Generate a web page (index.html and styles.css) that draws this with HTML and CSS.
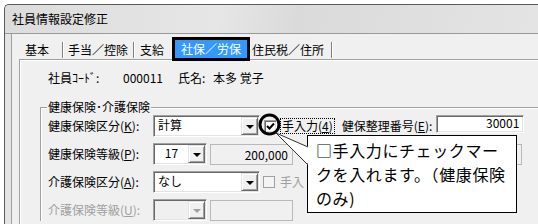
FILE: index.html
```html
<!DOCTYPE html>
<html lang="ja">
<head>
    <meta charset="UTF-8">
    <title>社員情報設定修正</title>
    <link rel="stylesheet" href="styles.css">
</head>
<body>
    <div class="window">
        <div class="titlebar">社員情報設定修正</div>
        <div class="client">
            <div class="tabs">
                <span class="tab tab-basic">基本</span>
                <span class="tab tab-allow">手当／控除</span>
                <span class="tab tab-pay">支給</span>
                <span class="tab tab-active">社保／労保</span>
                <span class="tab tab-res">住民税／住所</span>
            </div>
            <div class="panel">
                <div class="emp-row">
                    <span class="emp-label">社員ｺｰﾄﾞ:</span>
                    <span class="emp-code">000011</span>
                    <span class="emp-name-label">氏名:</span>
                    <span>本多 覚子</span>
                </div>

                <fieldset class="group">
                    <legend>健康保険･介護保険</legend>

                    <div class="row">
                        <span class="label">健康保険区分(<u>K</u>):</span>
                        <span class="combo combo-wide">
                            <span class="combo-value">計算</span>
                            <span class="combo-btn"><i class="arrow"></i></span>
                        </span>
                        <span class="check checked">
                            <svg width="9" height="9" viewBox="0 0 9 9"><path d="M1 4 L3.5 6.5 L8 1.5" fill="none" stroke="#000" stroke-width="2"/></svg>
                        </span>
                        <span class="check-label focus">手入力(<u>4</u>)</span>
                        <span class="label-num">健保整理番号(<u>E</u>):</span>
                        <span class="textbox">30001</span>
                    </div>

                    <div class="row">
                        <span class="label">健康保険等級(<u>P</u>):</span>
                        <span class="combo combo-narrow">
                            <span class="combo-value center">17</span>
                            <span class="combo-btn"><i class="arrow"></i></span>
                        </span>
                        <span class="readonly">200,000</span>
                        <span class="readonly readonly-far"></span>
                    </div>

                    <div class="row">
                        <span class="label">介護保険区分(<u>A</u>):</span>
                        <span class="combo combo-wide">
                            <span class="combo-value">なし</span>
                            <span class="combo-btn"><i class="arrow"></i></span>
                        </span>
                        <span class="check disabled"></span>
                        <span class="check-label muted">手入</span>
                    </div>

                    <div class="row">
                        <span class="label muted">介護保険等級(<u>U</u>):</span>
                        <span class="combo combo-narrow combo-disabled">
                            <span class="combo-value"></span>
                            <span class="combo-btn"><i class="arrow"></i></span>
                        </span>
                        <span class="readonly"></span>
                    </div>
                </fieldset>
            </div>
        </div>
    </div>

    <div class="callout">□手入力にチェックマー<br>クを入れます。（健康保険<br>のみ)</div>

    <svg class="marks" width="538" height="224" viewBox="0 0 538 224">
        <polygon points="276,133 309,147 309,165" fill="#fff"/>
        <polyline points="308,147 276,133 308,165" fill="none" stroke="#333" stroke-width="1"/>
        <circle cx="269.5" cy="124.5" r="9.5" fill="none" stroke="#000" stroke-width="3"/>
    </svg>
</body>
</html>
```

FILE: styles.css
```css
html, body {
    margin: 0;
    padding: 0;
    overflow: hidden;
}
body {
    width: 538px;
    height: 224px;
    background-color: #fff;
    font-family: "Noto Sans CJK JP", "Noto Sans", sans-serif;
    font-size: 12px;
    color: #000;
}
.window {
    box-sizing: border-box;
    margin: 4px 0 0 4px;
    width: 534px;
    height: 220px;
    border: 1px solid #5a5a5a;
    border-right: 0;
    border-bottom: 0;
    border-radius: 5px 0 0 0;
    background-color: #e4e4e4;
    display: flex;
    flex-direction: column;
    overflow: hidden;
}
.titlebar {
    flex: none;
    height: 28px;
    line-height: 28px;
    padding-left: 7px;
    background: linear-gradient(100deg, #dcdcdc 0%, #e6e6e6 40%, #dadada 55%, #e4e4e4 100%);
    border-bottom: 1px solid #9a9a9a;
    border-radius: 4px 0 0 0;
}
.client {
    flex: 1;
    margin-left: 6px;
    border-left: 1px solid #a0a0a0;
    background-color: #f0f0f0;
    overflow: hidden;
}

/* tabs */
.tabs {
    display: flex;
    align-items: flex-end;
    height: 25px;
    margin-left: 8px;
}
.tab {
    box-sizing: border-box;
    height: 16px;
    line-height: 16px;
    margin-bottom: 1px;
    padding-left: 5px;
    border-right: 1px solid #808080;
    box-shadow: 1px 0 0 #fff;
    white-space: nowrap;
}
.tab-basic { width: 43px; }
.tab-allow { width: 71px; padding-left: 5px; }
.tab-pay { width: 38px; padding-left: 6px; border-right: none; box-shadow: none; }
.tab-res { width: 82px; padding-left: 2px; }
.tab-active {
    position: relative;
    z-index: 1;
    box-sizing: border-box;
    width: 78px;
    height: 24px;
    line-height: 18px;
    margin-bottom: -2px;
    padding: 0;
    border: 3px solid #000;
    background-color: #3399ff;
    color: #fff;
    text-align: center;
    box-shadow: none;
}

/* tab page */
.panel {
    box-sizing: border-box;
    margin-left: 7px;
    height: 200px;
    padding: 11px 0 0 20px;
    border-top: 1px solid #a0a0a0;
    border-left: 1px solid #a0a0a0;
    box-shadow: inset 1px 1px 0 #fff;
}
.emp-row {
    display: flex;
    margin-left: 8px;
    line-height: 14px;
    white-space: nowrap;
}
.emp-label { width: 75px; }
.emp-code { width: 55px; }
.emp-name-label { width: 35px; }

.group {
    margin: 15px 0 0 0;
    padding: 0 0 0 6px;
    border: 0;
    border-top: 1px solid #a0a0a0;
    border-left: 1px solid #a0a0a0;
    box-shadow: inset 1px 1px 0 #fff;
    min-width: 0;
}
.group legend {
    padding: 0 1px;
    line-height: 14px;
    background-color: #f0f0f0;
}
.row {
    display: flex;
    align-items: center;
    height: 22px;
    margin: 6px 0 0 1px;
    white-space: nowrap;
}
.row:first-of-type {
    margin-top: 1px;
}
.label {
    width: 105px;
    line-height: 14px;
}
.muted {
    color: #a0a0a0;
}

/* combo boxes */
.combo {
    box-sizing: border-box;
    display: flex;
    height: 22px;
    padding: 1px;
    background-color: #fff;
    border-top: 1px solid #a0a0a0;
    border-left: 1px solid #a0a0a0;
    border-right: 1px solid #fff;
    border-bottom: 1px solid #fff;
    box-shadow: inset 1px 1px 0 #696969, inset -1px -1px 0 #e3e3e3;
}
.combo-wide { width: 107px; }
.combo-narrow { width: 54px; }
.combo-disabled { background-color: #f0f0f0; }
.combo-value {
    flex: 1;
    padding-left: 3px;
    line-height: 15px;
}
.combo-value.center {
    padding-left: 0;
    text-align: center;
}
.combo-btn {
    box-sizing: border-box;
    width: 17px;
    height: 18px;
    display: flex;
    align-items: center;
    justify-content: center;
    background-color: #f0f0f0;
    border: 1px solid;
    border-color: #e3e3e3 #696969 #696969 #e3e3e3;
    box-shadow: inset 1px 1px 0 #fff, inset -1px -1px 0 #a0a0a0;
}
.arrow {
    width: 0;
    height: 0;
    margin-top: 2px;
    border-left: 4px solid transparent;
    border-right: 4px solid transparent;
    border-top: 4px solid #000;
}
.combo-disabled .arrow {
    border-top-color: #a0a0a0;
}

/* check boxes */
.check {
    box-sizing: border-box;
    width: 13px;
    height: 13px;
    margin-left: 4px;
    display: flex;
    align-items: center;
    justify-content: center;
}
.check.checked {
    background-color: #fff;
    border-top: 1px solid #a0a0a0;
    border-left: 1px solid #a0a0a0;
    border-right: 1px solid #fff;
    border-bottom: 1px solid #fff;
    box-shadow: inset 1px 1px 0 #696969, inset -1px -1px 0 #e3e3e3;
}
.check.disabled {
    margin-left: 3px;
    width: 12px;
    height: 12px;
    border: 1px solid #a0a0a0;
    background-color: #f4f4f4;
}
.check-label {
    margin-left: 3px;
    padding: 0 1px;
    line-height: 14px;
    border: 1px solid transparent;
}
.check-label.focus {
    border: 1px dotted #000;
}
.label-num {
    margin-left: 7px;
    line-height: 14px;
}

/* text fields */
.textbox {
    box-sizing: border-box;
    width: 88px;
    height: 18px;
    margin: -4px 0 0 4px;
    padding-right: 4px;
    line-height: 14px;
    text-align: right;
    background-color: #fff;
    border-top: 1px solid #a0a0a0;
    border-left: 1px solid #a0a0a0;
    border-right: 1px solid #fff;
    border-bottom: 1px solid #fff;
    box-shadow: inset 1px 1px 0 #696969, inset -1px -1px 0 #e3e3e3;
}
.readonly {
    box-sizing: border-box;
    width: 83px;
    height: 21px;
    margin-left: 3px;
    padding-right: 4px;
    line-height: 19px;
    text-align: right;
    border: 1px solid #b9b9b9;
    background-color: #f0f0f0;
}
.readonly-far {
    width: 88px;
    margin-left: 141px;
}

/* balloon */
.callout {
    position: absolute;
    left: 307px;
    top: 135px;
    box-sizing: border-box;
    width: 210px;
    height: 78px;
    padding: 2px 0 0 8px;
    border: 1px solid #000;
    background-color: #fff;
    font-size: 16px;
    line-height: 24px;
    letter-spacing: 0.6px;
    white-space: nowrap;
}
.marks {
    position: absolute;
    left: 0;
    top: 0;
    pointer-events: none;
}
```
